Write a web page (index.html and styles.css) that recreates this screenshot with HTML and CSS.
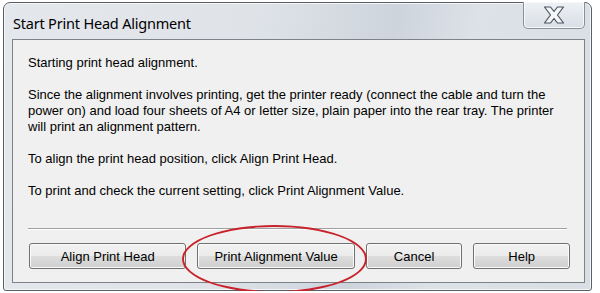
FILE: index.html
```html
<!DOCTYPE html>
<html lang="en">
<head>
    <meta charset="UTF-8">
    <title>Start Print Head Alignment</title>
    <link rel="stylesheet" href="styles.css">
</head>
<body>
    <div class="window">
        <div class="titlebar">
            <span class="title">Start Print Head Alignment</span>
            <button class="close-btn" aria-label="Close">
                <svg width="22" height="18" viewBox="0 0 22 18">
                    <path d="M1.5 1 L7.5 1 L11 5.5 L14.5 1 L20.5 1 L14.5 9 L20.5 17 L14.5 17 L11 12.5 L7.5 17 L1.5 17 L7.5 9 Z" fill="#f4f6f8" stroke="#4a5360" stroke-width="1.2" stroke-linejoin="round"/>
                </svg>
            </button>
        </div>
        <div class="client">
            <div class="message">
                <p>Starting print head alignment.</p>
                <p>Since the alignment involves printing, get the printer ready (connect the cable and turn the power on) and load four sheets of A4 or letter size, plain paper into the rear tray. The printer will print an alignment pattern.</p>
                <p>To align the print head position, click Align Print Head.</p>
                <p>To print and check the current setting, click Print Alignment Value.</p>
            </div>
            <div class="separator"></div>
            <div class="button-row">
                <button class="dlg-button wide">Align Print Head</button>
                <button class="dlg-button wide marked">Print Alignment Value</button>
                <button class="dlg-button narrow">Cancel</button>
                <button class="dlg-button narrow">Help</button>
            </div>
        </div>
    </div>
</body>
</html>
```

FILE: styles.css
```css
body {
    margin: 0;
    background-color: #ffffff;
    font-family: 'Liberation Sans', Arial, sans-serif;
    overflow: hidden;
}
.window {
    width: 589px;
    height: 289px;
    margin: 2px 0 0 3px;
    border: 1px solid #5a5f66;
    border-radius: 7px 7px 3px 3px;
    background: linear-gradient(100deg, #e4e8ed 0%, #dfe3e8 40%, #cdd4dc 62%, #dde2e8 75%, #d9dee4 100%);
    box-shadow: inset 0 0 0 1px #f4f6f8;
    display: flex;
    flex-direction: column;
    box-sizing: border-box;
}
.titlebar {
    height: 36px;
    display: flex;
    justify-content: space-between;
    align-items: flex-start;
    padding: 0 6px 0 9px;
}
.title {
    font-family: 'Noto Sans', 'Open Sans', sans-serif;
    font-size: 14.5px;
    color: #000000;
    margin-top: 10px;
    letter-spacing: -0.2px;
}
.close-btn {
    width: 62px;
    height: 27px;
    margin-top: -1px;
    border: 1px solid #8a9099;
    border-top: none;
    border-radius: 0 0 5px 5px;
    background: linear-gradient(#eef1f4, #d9dee5);
    box-shadow: inset 0 0 0 1px #f6f8fa;
    display: flex;
    align-items: center;
    justify-content: center;
    padding: 0 0 1px 0;
}
.client {
    flex: 1;
    margin: 0 6px 7px 8px;
    border: 1px solid #7d8288;
    background-color: #f0f0f0;
    display: flex;
    flex-direction: column;
    padding: 0 14px 0 15px;
}
.message {
    font-size: 13px;
    color: #000000;
    line-height: 16px;
    padding-top: 15px;
}
.message p {
    margin: 0 0 16px 0;
}
.message p:last-child {
    margin-bottom: 0;
}
.separator {
    margin-top: 29px;
    border-top: 1px solid #a0a0a0;
    border-bottom: 1px solid #ffffff;
    margin-right: 3px;
}
.button-row {
    display: flex;
    gap: 11px;
    margin-top: 13px;
    padding-left: 1px;
}
.dlg-button {
    height: 26px;
    font-family: 'Liberation Sans', Arial, sans-serif;
    font-size: 13px;
    color: #000000;
    border: 1px solid #707070;
    border-radius: 3px;
    background: linear-gradient(#f2f2f2 0%, #ebebeb 48%, #dddddd 52%, #cfcfcf 100%);
    box-shadow: inset 0 0 0 1px #fbfbfb;
    padding: 0;
}
.wide { width: 158px; }
.narrow { width: 97px; }
.marked {
    position: relative;
}
.marked::after {
    content: "";
    position: absolute;
    left: -16px;
    top: -19px;
    width: 181px;
    height: 64px;
    border: 2px solid #c8232c;
    border-radius: 50%;
    pointer-events: none;
}
```
